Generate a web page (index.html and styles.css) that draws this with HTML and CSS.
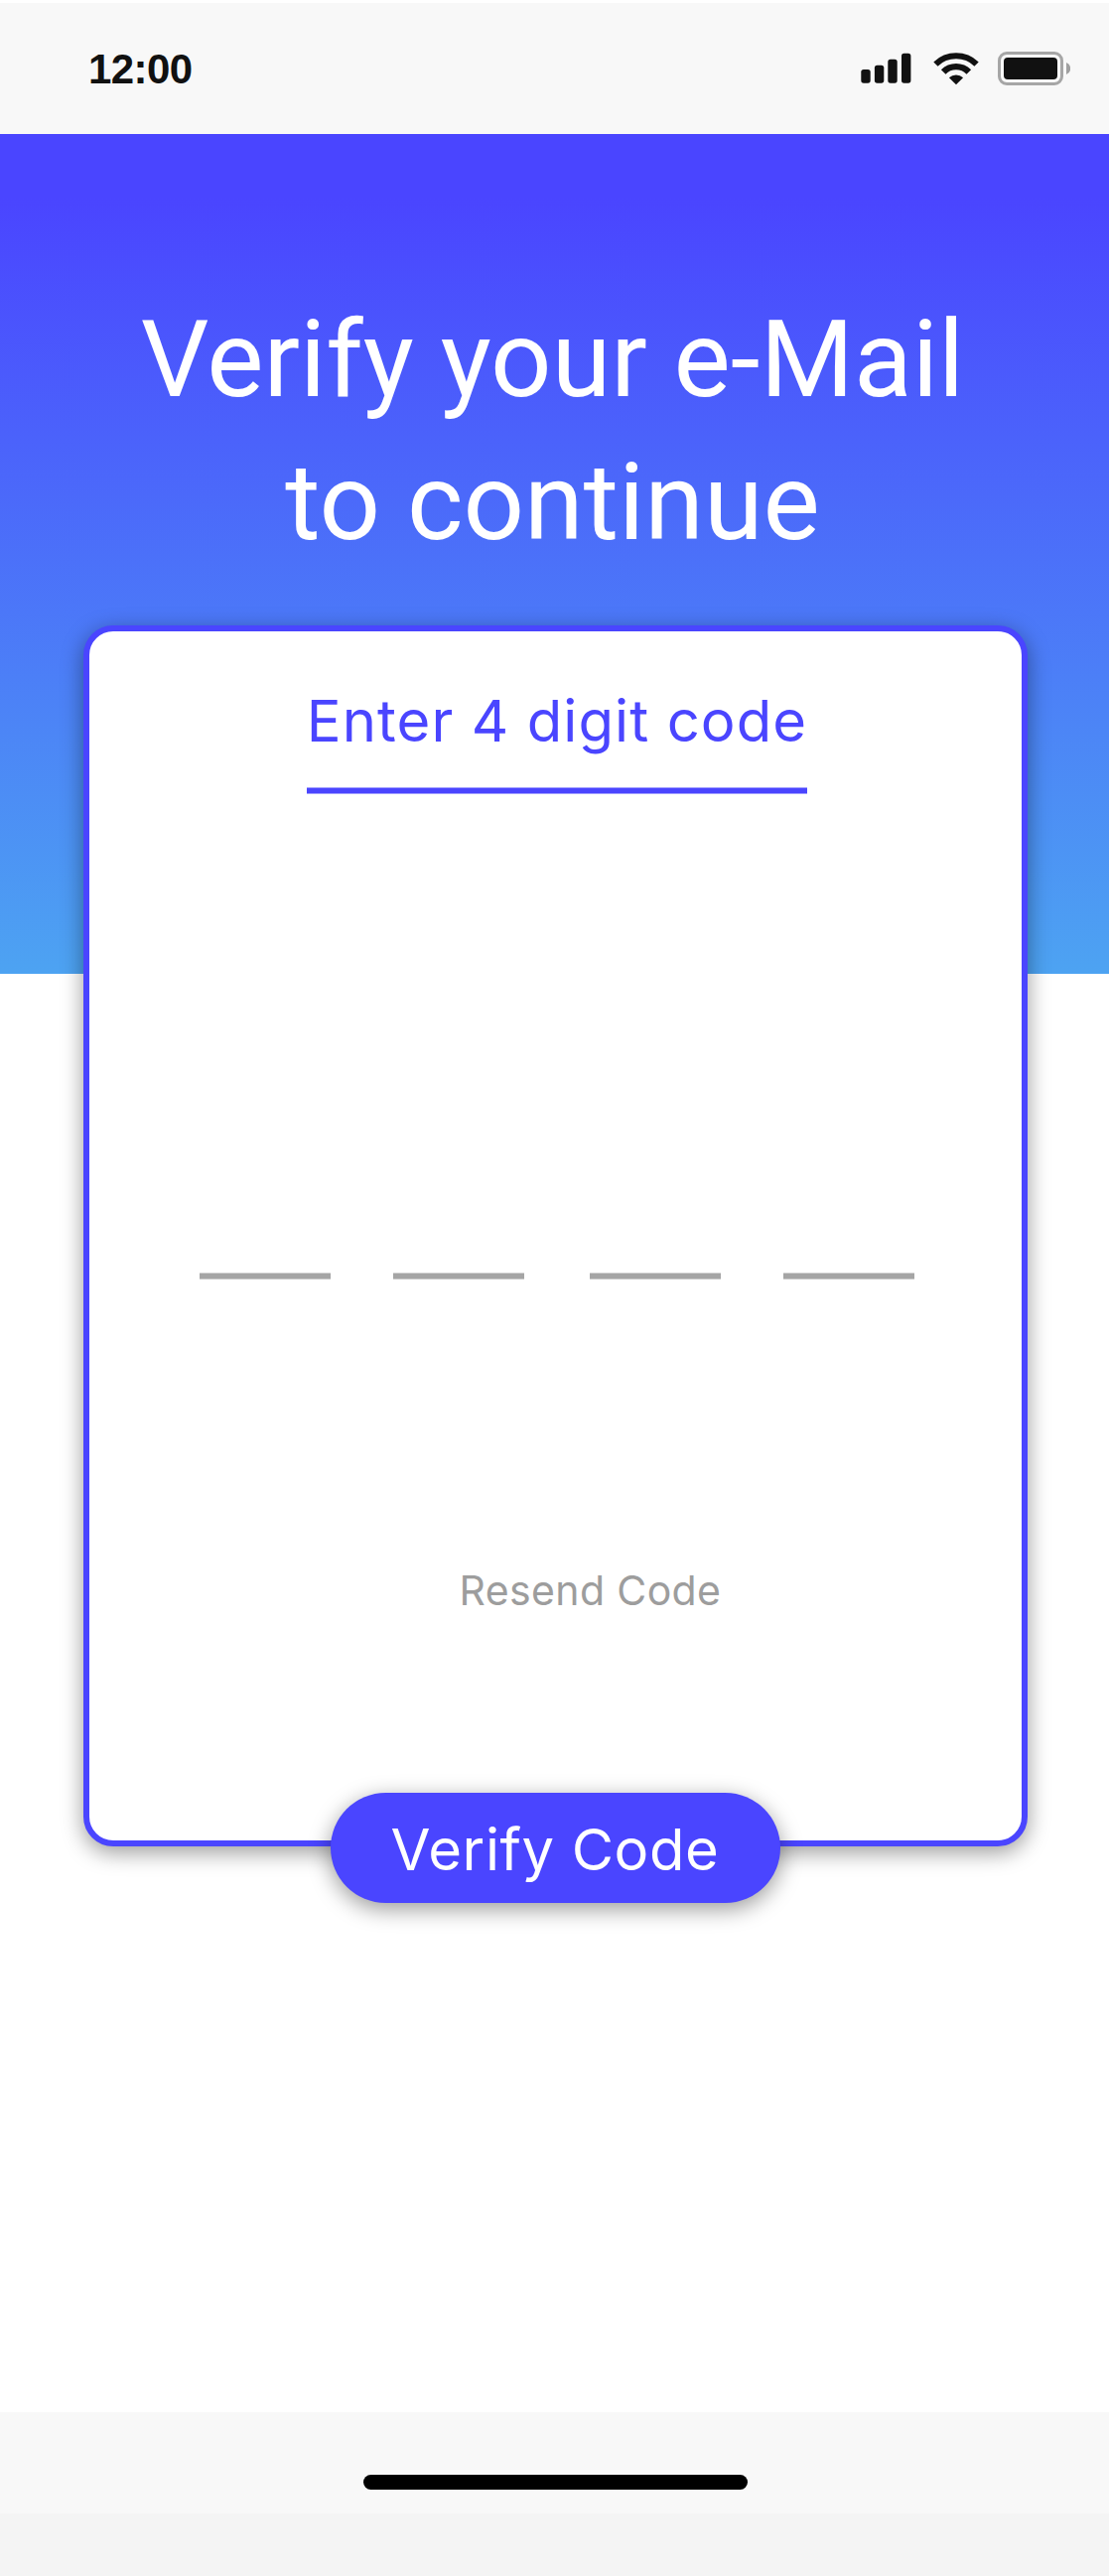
FILE: index.html
```
<!DOCTYPE html>
<html lang="en">
<head>
  <meta charset="utf-8">
  <title>Verify your e-Mail</title>
  <link rel="stylesheet" href="styles.css">
</head>
<body>
  <div class="screen">
    <header class="status-bar">
      <span class="time">12:00</span>
      <div class="status-icons">
        <svg class="signal" width="51" height="31" viewBox="0 0 51 31" aria-label="Signal">
          <rect x="0.3" y="17" width="9.4" height="13.7" rx="2.6"/>
          <rect x="13.9" y="12.8" width="9.4" height="17.9" rx="2.6"/>
          <rect x="27.3" y="6.8" width="9.4" height="23.9" rx="2.6"/>
          <rect x="41" y="0.8" width="9.4" height="29.9" rx="2.6"/>
        </svg>
        <svg class="wifi" width="46" height="34" viewBox="0 0 46 34" aria-label="Wi-Fi">
          <path d="M0.3 10.6A32 32 0 0 1 45.7 10.6L41.4 14.8A25.9 25.9 0 0 0 4.6 14.8Z"/>
          <path d="M7.9 18.2A21.3 21.3 0 0 1 38.1 18.2L33.5 22.8A14.6 14.6 0 0 0 12.5 22.8Z"/>
          <path d="M15.9 26.3A10.3 10.3 0 0 1 30.1 26.3L23 33.3Z"/>
        </svg>
        <svg class="battery" width="73" height="34" viewBox="0 0 73 34" aria-label="Battery">
          <rect class="battery-shell" x="1.5" y="1.5" width="63" height="31" rx="7.5"/>
          <rect x="6" y="6" width="54" height="22" rx="4"/>
          <path class="battery-cap" d="M69 11A6.4 6.4 0 0 1 69 23Z"/>
        </svg>
      </div>
    </header>

    <main>
      <section class="hero">
        <h1>Verify your e-Mail<br>to continue</h1>
      </section>
      <section class="card">
        <h2>Enter 4 digit code</h2>
        <div class="digits">
          <span class="digit"></span>
          <span class="digit"></span>
          <span class="digit"></span>
          <span class="digit"></span>
        </div>
        <a class="resend">Resend Code</a>
      </section>
      <button class="verify" type="button">Verify Code</button>
    </main>

    <footer class="home-bar">
      <div class="home-indicator"></div>
    </footer>
  </div>
</body>
</html>
```
FILE: styles.css
```
*,
*::after {
  box-sizing: border-box;
}

body {
  margin: 0;
  background: #fff;
}

.screen {
  display: flex;
  flex-direction: column;
  width: 1117px;
  height: 2595px;
  overflow: hidden;
  font-family: Inter, "Liberation Sans", sans-serif;
}

.status-bar {
  flex: none;
  display: flex;
  justify-content: space-between;
  align-items: flex-start;
  height: 135px;
  padding: 43px 39px 0 89px;
  border-top: 3px solid #fff;
  background: #f8f8f8;
}

.time {
  font: bold 42px/47px "Liberation Sans", Arial, sans-serif;
  letter-spacing: -0.6px;
  color: #111;
}

.status-icons {
  display: flex;
  align-items: flex-start;
  padding-top: 6px;
  fill: #111;
}

.status-icons svg {
  display: block;
}

.signal {
  margin: 1px 22px 0 0;
}

.wifi {
  margin-right: 19px;
}

.battery-shell {
  fill: none;
  stroke: #a6a6a6;
  stroke-width: 3;
}

.battery-cap {
  fill: #a0a0a0;
}

main {
  flex: 1;
  display: flex;
  flex-direction: column;
  align-items: center;
}

.hero {
  flex: none;
  align-self: stretch;
  height: 846px;
  padding: 155px 4px 0 0;
  background: linear-gradient(#4a45ff 0, #4a45ff 65px, #4da3f2 100%);
}

h1 {
  margin: 0;
  font: 400 108px/144px Roboto, sans-serif;
  color: #fff;
  text-align: center;
}

.card {
  flex: none;
  display: flex;
  flex-direction: column;
  align-items: center;
  width: 951px;
  height: 1230px;
  margin: -351px 0 0 2px;
  padding: 55px 0 0 3px;
  border: 6px solid #4a45ff;
  border-radius: 30px;
  background: #fff;
  box-shadow: 0 6px 22px rgba(0, 0, 0, 0.4);
}

h2 {
  margin: 0;
  font-size: 58px;
  font-weight: 400;
  line-height: 70px;
  letter-spacing: 1.08px;
  color: #4a45ff;
}

/* Rule with softened upper and lower edges */
h2::after {
  content: "";
  display: block;
  height: 7px;
  margin-top: 32px;
  border: solid #a19eff;
  border-width: 1px 0;
  background: #4a45ff;
}

.digits {
  display: flex;
  gap: 63px;
  margin-top: 482px;
}

.digit {
  width: 132px;
  height: 7px;
  border: solid #cdcdcd;
  border-width: 1px 0;
  background: #a5a5a5;
}

.digit:nth-child(3) {
  margin-left: 3px;
}

.resend {
  margin: 288px 0 0 67px;
  font-size: 41px;
  line-height: 50px;
  letter-spacing: 0.38px;
  color: #9d9d9d;
}

.verify {
  flex: none;
  width: 453px;
  height: 111px;
  margin: -54px 0 0 2px;
  padding: 22px 1px 19px 0;
  border: 0;
  border-radius: 56px;
  background: #4a45ff;
  box-shadow: 0 6px 22px rgba(0, 0, 0, 0.4);
  font: 400 58px/70px Inter, sans-serif;
  letter-spacing: 0.58px;
  color: #fff;
}

.home-bar {
  flex: none;
  height: 165px;
  padding-top: 63px;
  border-bottom: 63px solid #f4f4f4;
  background: #f8f8f8;
}

.home-indicator {
  width: 387px;
  height: 15px;
  margin-left: 366px;
  border-radius: 8px;
  background: #000;
}
```
